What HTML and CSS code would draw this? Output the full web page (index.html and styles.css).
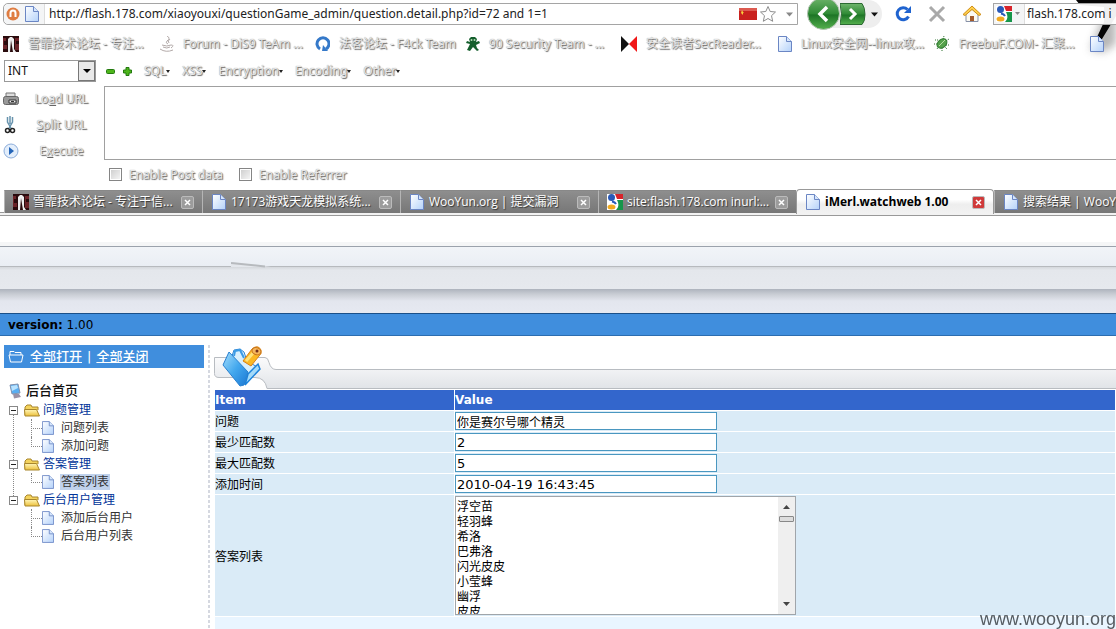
FILE: index.html
```html
<!DOCTYPE html>
<html lang="zh-CN">
<head>
<meta charset="utf-8">
<title>iMerl.watchweb 1.00</title>
<link rel="stylesheet" href="styles.css">
</head>
<body>
<svg class="defs" aria-hidden="true">
  <defs>
    <linearGradient id="paper" x1="0" y1="0" x2="1" y2="1"><stop offset="0" stop-color="#fff"/><stop offset="1" stop-color="#b4d2fa"/></linearGradient>
    <linearGradient id="green" x1="0" y1="0" x2="0" y2="1"><stop offset="0" stop-color="#6fb56c"/><stop offset=".5" stop-color="#2f8a35"/><stop offset=".55" stop-color="#1d7526"/><stop offset="1" stop-color="#55b04e"/></linearGradient>
    <linearGradient id="gold" x1="0" y1="0" x2="0" y2="1"><stop offset="0" stop-color="#fff6b8"/><stop offset="1" stop-color="#ecc03c"/></linearGradient>
    <linearGradient id="blue" x1="0" y1="0" x2="1" y2="1"><stop offset="0" stop-color="#a5ddfb"/><stop offset=".5" stop-color="#43a8ee"/><stop offset="1" stop-color="#1b78d4"/></linearGradient>
    <linearGradient id="silver" x1="0" y1="0" x2="0" y2="1"><stop offset="0" stop-color="#fbfbfc"/><stop offset="1" stop-color="#e1e4e8"/></linearGradient>
    <filter id="soft" x="-50%" y="-50%" width="200%" height="200%"><feGaussianBlur stdDeviation="4"/></filter>
  </defs>
  <symbol id="doc" viewBox="0 0 14 16"><path d="M.5.5h8l5 5v10H.5z" fill="url(#paper)" stroke="#6b86c4"/><path d="M8.500.5v5h5" fill="#d5e5fb" stroke="#6b86c4"/></symbol>
  <symbol id="google" viewBox="0 0 16 16"><rect width="16" height="16" fill="#fff"/><path d="M8 0h8v5h-6z" fill="#d8232a"/><path d="M10 6h6v10H9c3-3 3-6 1-10z" fill="#16964a"/><circle cx="4.500" cy="3.500" r="3.500" fill="#2859b8"/><ellipse cx="4.500" cy="13" rx="4" ry="2.500" fill="#f1a91f"/><path d="M5 7.500q3 .5 4 2.500" fill="none" stroke="#2859b8" stroke-width="2"/></symbol>
  <symbol id="forum" viewBox="0 0 16 16"><rect width="16" height="16" fill="#2a0b0d"/><path d="M0 2h3v3H1v4h3v4H0M12 2h4v3h-3v3h3v6h-4" fill="#6b2328"/><path d="M5 16V3l2-2h2l2 2v10l2 3h-3L8 4 7 16z" fill="#eee"/></symbol>
  <symbol id="folder" viewBox="0 0 16 13"><path d="M1 11V3l2-2h4l1 2h6v3" fill="#f4d35d" stroke="#a8862d"/><path d="M1 12 .5 5.500h12L15.500 12z" fill="url(#gold)" stroke="#a8862d"/></symbol>
  <symbol id="close" viewBox="0 0 13 13"><rect x=".5" y=".5" width="12" height="12" rx="1.500" fill="currentColor" stroke="#bbb"/><path d="m4 4 5 5M9 4 4 9" stroke="#fff" stroke-width="1.500"/></symbol>
</svg>

<header class="chrome">
  <svg class="stroke" viewBox="0 0 56 62" aria-hidden="true"><path d="M30 50 42 20 56 0v44l-12 8z" fill="#999" opacity=".7" filter="url(#soft)"/><path d="M16 0h40v16L42 39l-6 8-4 1 12-26V7L20 5z" fill="#050505"/></svg>
  <div class="nav">
    <div class="address">
      <span class="identity">
        <svg width="14" height="14" viewBox="0 0 14 14"><circle cx="7" cy="7" r="6.500" fill="#df7d42"/><path d="M4.500 10V6a2.500 2.500 0 0 1 5 0v4" fill="none" stroke="#fff" stroke-width="2"/></svg>
        <svg width="14" height="16"><use href="#doc"/></svg>
      </span>
      <input class="url" type="text" aria-label="地址" value="http://flash.178.com/xiaoyouxi/questionGame_admin/question.detail.php?id=72 and 1=1">
      <svg width="18" height="12"><rect width="18" height="12" fill="#c9211e"/><path d="M0 0h18v3H0z" fill="#dc5a50"/><path d="m3 2 1 2h1L4 5v2L2 5z" fill="#f7d23c"/></svg>
      <svg width="18" height="18" viewBox="0 0 18 18"><path d="m9 1.500 2.200 5 5.300.5-4 3.700 1.200 5.600L9 13.500l-4.700 2.800 1.200-5.600-4-3.700 5.300-.5z" fill="#fff" stroke="#8e8e8e"/></svg>
      <svg class="drop" width="7" height="5"><path d="M0 .5h7L3.500 4.500z" fill="#888"/></svg>
    </div>
    <div class="travel">
      <button type="button" aria-label="后退"><svg width="33" height="32" viewBox="0 0 33 32"><circle cx="16.500" cy="13.500" r="16" fill="url(#green)" stroke="#b4c4b3"/><path d="m20 7-7 7 7 7" fill="none" stroke="#fff" stroke-width="3.500"/></svg></button>
      <button type="button" aria-label="前进"><svg width="26" height="32" viewBox="0 0 26 32"><path d="M0 3.500h22q3 4 3 11t-3 10H0q3-11 0-21z" fill="url(#green)" stroke="#2c6a32"/><path d="m10 9 5 5-5 5" fill="none" stroke="#fff" stroke-width="3"/></svg></button>
      <button class="history" type="button" aria-label="历史"><svg width="7" height="5"><path d="M0 .5h7L3.500 4.500z" fill="#111"/></svg></button>
    </div>
    <button type="button" aria-label="刷新"><svg width="18" height="18" viewBox="0 0 18 18"><path d="M14.500 11.500a6 6 0 1 1-1-7" fill="none" stroke="#1f63cf" stroke-width="3"/><path d="M17 1v7h-7z" fill="#1f63cf"/></svg></button>
    <button type="button" aria-label="停止"><svg width="18" height="18" viewBox="0 0 18 18"><path d="m2 2 14 14M16 2 2 16" stroke="#a9a9a9" stroke-width="3"/></svg></button>
    <button type="button" aria-label="主页"><svg width="20" height="18" viewBox="0 0 20 18"><path d="M4 9v7.500h12V9l-6-5z" fill="#fbf9f2" stroke="#8791a8"/><path d="M8 11h4v5H8z" fill="#a35b2d"/><path d="M1 9.500 10 1l9 8.500-2 1-7-6-7 6z" fill="#ffd04d" stroke="#cf8d16"/></svg></button>
    <div class="search">
      <span class="engine"><svg width="16" height="16"><use href="#google"/></svg><svg width="5" height="4"><path d="M0 0h5L2.500 3z" fill="#888"/></svg></span>
      <input class="url" type="text" aria-label="搜索" value="flash.178.com i">
    </div>
  </div>

  <nav class="bookmarks">
    <a href="#"><svg width="16" height="16"><use href="#forum"/></svg><span>雪霏技术论坛 - 专注...</span></a>
    <a href="#"><svg width="14" height="16" viewBox="0 0 14 16"><path d="M7 0q4 2 0 5-2 2 1 3M10 3q-3 2-1 4M2 9q5 2 9 0 4 0 0 3M3 11q4 2 7 0M0 13q6 4 13 1" fill="none" stroke="#b3aaa9"/></svg><span>Forum - DiS9 TeAm ...</span></a>
    <a href="#"><svg width="15" height="16" viewBox="0 0 15 16"><path d="M5 13A6 6 0 1 1 11 13" fill="none" stroke="#3579c9" stroke-width="3"/><path d="m8 9 5 6H7z" fill="#3579c9"/></svg><span>法客论坛 - F4ck Team</span></a>
    <a href="#"><svg width="14" height="16" viewBox="0 0 14 16"><path d="M5 1h4l2 2-1 3 3-1 1 2-4 2 1 3 2 2-2 1-4-4-3 4-3-1 3-6-4-1 1-2 3 1-1-3z" fill="#145f2c"/><circle cx="5.500" cy="4" r="1" fill="#b6ddb8"/><circle cx="8.500" cy="4" r="1" fill="#b6ddb8"/></svg><span>90 Security Team - ...</span></a>
    <a href="#"><svg width="16" height="16"><path d="M0 0 8 8 0 16z" fill="#111"/><path d="M16 0 8 8l8 8z" fill="#f01818"/></svg><span>安全读者SecReader...</span></a>
    <a href="#"><svg width="14" height="16"><use href="#doc"/></svg><span>Linux安全网--linux攻...</span></a>
    <a href="#"><svg width="16" height="16" viewBox="0 0 16 16"><path d="M1 4h3M0 8h4M3 13l2-3M8 15v-3M13 13l-2-2M15 9h-3M15 3l-3 2M10 0 9 3" stroke="#317231" stroke-dasharray="1 1"/><ellipse cx="8" cy="7.500" rx="5.500" ry="4" fill="#55a24c" stroke="#2f7a2f" transform="rotate(-40 8 7.500)"/><path d="m5 10 6-6" stroke="#b9e0a5"/></svg><span>FreebuF.COM- 汇聚...</span></a>
    <a href="#" aria-label="书签"><svg width="14" height="16"><use href="#doc"/></svg></a>
  </nav>

  <div class="hackbar">
    <div class="tools">
      <span class="combo"><select aria-label="类型"><option>INT</option></select><span class="arrow"></span></span>
      <button type="button" aria-label="减"><svg width="9" height="9"><rect x=".5" y="2.500" width="8" height="4" rx="1" fill="#4db51b" stroke="#23790f"/></svg></button>
      <button class="plus" type="button" aria-label="加"><svg width="9" height="9"><path d="M3 .5h3V3h2.500v3H6v2.500H3V6H.5V3H3z" fill="#4db51b" stroke="#23790f"/></svg></button>
      <button class="menu" type="button">SQL</button>
      <button class="menu" type="button">XSS</button>
      <button class="menu" type="button">Encryption</button>
      <button class="menu" type="button">Encoding</button>
      <button class="menu" type="button">Other</button>
    </div>
    <div class="loader">
      <div class="actions">
        <button type="button"><svg width="16" height="16" viewBox="0 0 16 16"><path d="M3 6V2h9v4" fill="#ddd" stroke="#777"/><rect x=".5" y="5.500" width="15" height="8" rx="2" fill="#999" stroke="#666"/><path d="M6 9h7v3H6z" fill="#eee" stroke="#333"/><path d="M8 10.500h3" stroke="#333"/></svg><span>Lo<u>a</u>d URL</span></button>
        <button type="button"><svg width="16" height="18" viewBox="0 0 16 18"><path d="M4.500 1v5l4 7M9.500 1v5l-4 7M7 0v8" fill="none" stroke="#6793ad" stroke-width="1.500"/><circle cx="4.500" cy="14.500" r="2" fill="none" stroke="#222" stroke-width="1.500"/><circle cx="9.500" cy="14.500" r="2" fill="none" stroke="#222" stroke-width="1.500"/></svg><span><u>S</u>plit URL</span></button>
        <button type="button"><svg width="16" height="16" viewBox="0 0 16 16"><circle cx="8" cy="8" r="7" fill="#e3eefb" stroke="#8daedb"/><path d="m6 4 5 4-5 4z" fill="#2465b8"/></svg><span>E<u>x</u>ecute</span></button>
      </div>
      <textarea aria-label="URL"></textarea>
    </div>
    <div class="checks">
      <label><input type="checkbox"><span>Enable Post data</span></label>
      <label><input type="checkbox"><span>Enable Referrer</span></label>
    </div>
  </div>

  <div class="tabs">
    <div class="tab"><svg width="16" height="16"><use href="#forum"/></svg><span>雪霏技术论坛 - 专注于信...</span><button type="button" aria-label="关闭"><svg width="13" height="13"><use href="#close"/></svg></button></div>
    <div class="tab"><svg width="16" height="16"><use href="#doc"/></svg><span>17173游戏天龙模拟系统...</span><button type="button" aria-label="关闭"><svg width="13" height="13"><use href="#close"/></svg></button></div>
    <div class="tab"><svg width="16" height="16"><use href="#doc"/></svg><span>WooYun.org | 提交漏洞</span><button type="button" aria-label="关闭"><svg width="13" height="13"><use href="#close"/></svg></button></div>
    <div class="tab"><svg width="16" height="16"><use href="#google"/></svg><span>site:flash.178.com inurl:...</span><button type="button" aria-label="关闭"><svg width="13" height="13"><use href="#close"/></svg></button></div>
    <div class="tab active"><svg width="16" height="16"><use href="#doc"/></svg><span>iMerl.watchweb 1.00</span><button type="button" aria-label="关闭"><svg width="13" height="13"><use href="#close"/></svg></button></div>
    <div class="tab last"><svg width="16" height="16"><use href="#doc"/></svg><span>搜索结果 | WooY</span></div>
  </div>
</header>

<div class="banner">
  <div class="band-top"><svg class="notch" width="40" height="6" viewBox="0 0 40 6"><path d="M0 0v5h40z" fill="#e4e7ec"/><path d="M0 1 34 4.500" stroke="#b7babe" stroke-width="2"/></svg></div>
  <div class="band-mid"></div>
  <div class="band-low"></div>
</div>
<div class="version"><b>version:</b> 1.00</div>

<div class="layout">
  <aside class="side">
    <div class="side-head">
      <svg width="16" height="13" viewBox="0 0 16 13"><path d="M2 5V1.500h4l1 1h6V5M1 5h14l-1.500 7h-11z" fill="none" stroke="#fff"/></svg>
      <a href="#">全部打开</a><span>|</span><a href="#">全部关闭</a>
    </div>
    <div class="tree">
      <div class="root"><svg width="13" height="16" viewBox="0 0 13 16"><path d="m1 2 8-1 2 9-8 1z" fill="#59aef2" stroke="#8291ad"/><path d="m2 3 6-1 1 3-6 3z" fill="#b9e3ff"/><path d="M4 11h6l2 3-7 1.500z" fill="#9a91a5"/></svg>后台首页</div>
      <ul>
        <li><div class="node"><i class="toggle"></i><svg width="16" height="13"><use href="#folder"/></svg><a href="#">问题管理</a></div>
          <ul><li><svg width="12" height="14"><use href="#doc"/></svg><a href="#">问题列表</a></li><li><svg width="12" height="14"><use href="#doc"/></svg><a href="#">添加问题</a></li></ul></li>
        <li><div class="node"><i class="toggle"></i><svg width="16" height="13"><use href="#folder"/></svg><a href="#">答案管理</a></div>
          <ul><li><svg width="12" height="14"><use href="#doc"/></svg><a class="current" href="#">答案列表</a></li></ul></li>
        <li><div class="node"><i class="toggle"></i><svg width="16" height="13"><use href="#folder"/></svg><a href="#">后台用户管理</a></div>
          <ul><li><svg width="12" height="14"><use href="#doc"/></svg><a href="#">添加后台用户</a></li><li><svg width="12" height="14"><use href="#doc"/></svg><a href="#">后台用户列表</a></li></ul></li>
      </ul>
    </div>
  </aside>
  <div class="divider"></div>
  <main class="main">
    <div class="ribbon">
      <svg width="62" height="44" viewBox="0 0 62 44">
        <path d="M.5 12.500H51q3 0 4 5 2 7 7 7v19H53q-2-11-12-11H5q-4.500 0-4.500-4z" fill="url(#silver)"/>
        <path d="M62 24.500q-5 0-7-7-1-5-4-5H.5v16q0 4 4.500 4h36q10 0 12 11h9" fill="none" stroke="#b8bcc1"/>
        <path d="m18 11 2-6 6-1 4 3 3 9 12 7-16 16z" fill="#d7effd" stroke="#2c85d4"/>
        <path d="m20 11 1-5 5-1 4 8" fill="none" stroke="#3a9be6" stroke-width="2"/>
        <path d="m34 29 10-10 2 5-15 16z" fill="#a4daf9" stroke="#1c83dc" stroke-width="1.500"/>
        <path d="m15 7 19 20-4 13-4 1L9 20z" fill="url(#blue)" stroke="#2880d0"/>
        <path d="m29 16 9-12q6-5 9 1 1 4-2 6l-8 10z" fill="#fbb823" stroke="#d98116"/>
        <path d="M32 16 40 7" stroke="#ffe27a" stroke-width="3"/>
        <ellipse cx="42.500" cy="6" rx="4.500" ry="3.500" fill="#f6b65c" stroke="#c6741d" transform="rotate(20 42 6)"/><circle cx="43" cy="6" r="1.500" fill="#742f1b"/>
      </svg>
      <div class="ribbon-rest"></div>
    </div>
    <table>
      <colgroup><col class="col-item"><col></colgroup>
      <thead><tr><th>Item</th><th>Value</th></tr></thead>
      <tbody>
        <tr><td><label for="q">问题</label></td><td><input id="q" type="text" value="你是赛尔号哪个精灵"></td></tr>
        <tr><td><label for="min">最少匹配数</label></td><td><input id="min" type="text" value="2"></td></tr>
        <tr><td><label for="max">最大匹配数</label></td><td><input id="max" type="text" value="5"></td></tr>
        <tr><td><label for="time">添加时间</label></td><td><input id="time" type="text" value="2010-04-19 16:43:45"></td></tr>
        <tr><td><label for="answers">答案列表</label></td><td>
          <div class="listbox">
            <select id="answers" multiple size="8"><option>浮空苗</option><option>轻羽蜂</option><option>希洛</option><option>巴弗洛</option><option>闪光皮皮</option><option>小莹蜂</option><option>幽浮</option><option>皮皮</option></select>
            <div class="scroll"><svg width="7" height="4"><path d="M3.500 0 7 4H0z" fill="#444"/></svg><i></i><svg width="7" height="4"><path d="M0 0h7L3.500 4z" fill="#444"/></svg></div>
          </div></td></tr>
      </tbody>
    </table>
    <div class="foot"></div>
  </main>
</div>
<div class="watermark">www.wooyun.org</div>
</body>
</html>
```
FILE: styles.css
```css
* { box-sizing: border-box; }
body {
  display: flex;
  flex-direction: column;
  margin: 0;
  height: 100vh;
  overflow: hidden;
  background: #fff;
  color: #000;
  font: 12px/18px "DejaVu Sans", "Noto Sans CJK SC", sans-serif;
}
button { border: 0; padding: 0; background: none; font: inherit; color: inherit; }
svg { display: block; flex: none; }
a { color: inherit; text-decoration: none; }
ul { margin: 0; padding: 0; list-style: none; }
.defs { position: absolute; width: 0; height: 0; }

/* Browser toolbars */
.chrome {
  position: relative;
  flex: none;
  font: 12px/18px "Noto Sans", "Noto Sans CJK SC", sans-serif;
  border-bottom: 1px solid #999;
}
.stroke { position: absolute; top: 0; right: 0; width: 56px; height: 62px; }
.nav { position: relative; display: flex; align-items: center; height: 28px; padding-left: 3px; }
.address, .search {
  display: flex;
  align-items: center;
  height: 22px;
  background: #fff;
  border: 1px solid #a5a5a5;
}
.address { flex: 1; gap: 2px; border-radius: 5px 0 0 5px; padding-right: 4px; }
.identity, .engine {
  display: flex;
  align-items: center;
  gap: 5px;
  height: 100%;
  padding: 0 4px 0 2px;
  border-right: 1px solid #ddd;
  background: #f4f5f6;
  border-radius: 5px 0 0 5px;
}
.identity { width: 41px; }
.engine { gap: 3px; border-radius: 0; }
.url {
  flex: 1;
  min-width: 0;
  border: 0;
  padding: 0 0 0 2px;
  background: none;
  font: 12px/18px "Noto Sans", "Noto Sans CJK SC", sans-serif;
  color: #222;
}
.drop { margin-left: 7px; }
.travel {
  display: flex;
  margin: 0 12px 0 9px;
  height: 28px;
  background: #eee;
  border-radius: 14px;
}
.travel button { height: 28px; }
.history { width: 16px; padding-left: 5px; }
.nav > button { margin-right: 16px; }
.nav > button:last-of-type { margin-right: 11px; }
.search { flex: 0 0 123px; min-width: 0; border-right: 0; background: #fffffff0; }
.bookmarks {
  position: relative;
  display: grid;
  grid-template-columns: 157px 155px 151px 155px 157px 156px 156px 26px;
  height: 32px;
  padding-left: 3px;
  align-items: center;
}
.bookmarks a { display: flex; align-items: center; gap: 9px; white-space: nowrap; }
.bookmarks a span, .menu, .actions span, .checks span {
  color: #e8e8e8;
  text-shadow: 1px 1px 1px #666, 0 0 1px #888;
}
.tools { display: flex; align-items: center; padding-left: 4px; height: 22px; }
.combo { position: relative; width: 92px; height: 22px; margin-right: 10px; }
.combo select {
  appearance: none;
  width: 100%;
  height: 100%;
  border: 1px solid #999;
  border-radius: 0;
  background: #fff;
  padding: 0 3px;
  font: 12px/18px "Noto Sans", sans-serif;
  color: #111;
}
.arrow {
  position: absolute;
  top: 1px;
  right: 1px;
  width: 17px;
  height: 20px;
  border: 1px solid #777;
  background: #e8e8e8;
  pointer-events: none;
}
.arrow::after { content: ""; position: absolute; left: 4px; top: 7px; border: 4px solid transparent; border-top-color: #000; border-bottom: 0; }
.plus { margin: 0 12px 0 8px; }
.menu { display: flex; align-items: center; margin-right: 12px; }
.menu::after { content: ""; border: 2px solid transparent; border-top: 3px solid #222; border-bottom: 0; }
.loader { display: flex; padding-top: 4px; }
.actions { width: 104px; flex: none; padding-left: 3px; }
.actions button { display: grid; grid-template-columns: 16px 1fr; align-items: center; width: 100%; height: 26px; }
.loader textarea { flex: 1; height: 74px; margin: 0; resize: none; border: 1px solid #a0a0a0; border-right: 0; border-radius: 0; background: #fff; }
.checks { display: flex; gap: 16px; height: 25px; padding: 0 0 4px 109px; align-items: center; }
.checks label { display: flex; align-items: center; gap: 7px; }
.checks input { appearance: none; width: 13px; height: 13px; margin: 0; border: 1px solid #858585; background: linear-gradient(135deg, #ccc, #f8f8f8); box-shadow: inset 0 0 0 1px #fff; }
.tabs {
  display: flex;
  height: 26px;
  padding-left: 4px;
  overflow: hidden;
  font-family: "Open Sans", "Noto Sans CJK SC", sans-serif;
  background: linear-gradient(#fff 23px, #999 23px, #999 24px, #f2f2f2 24px);
}
.tab {
  display: flex;
  flex: 0 0 198px;
  align-items: center;
  gap: 4px;
  height: 23px;
  padding: 0 8px;
  margin-top: 1px;
  border-left: 1px solid #b5b5b5;
  border-top: 1px solid #888;
  background: linear-gradient(#8e8e8e, #777);
  color: #fff;
  text-shadow: 1px 1px 1px #333;
  white-space: nowrap;
}
.tab.last { flex: 1 0 123px; padding-right: 0; }
.tab span { flex: 1; min-width: 0; }
.tab button { color: #9c9c9c; }
.tab.active {
  height: 25px;
  margin-top: 0;
  border: 1px solid #999;
  border-bottom: 0;
  border-radius: 4px 4px 0 0;
  background: linear-gradient(#fff 40%, #eee 60%, #f2f2f2);
  color: #000;
  font-weight: 700;
  text-shadow: none;
}
.tab.active button { color: #d03a3a; }

/* Page banner */
.banner { flex: none; padding-top: 26px; }
.band-top {
  position: relative;
  height: 25px;
  border-top: 4px solid #f5f6f7;
  border-bottom: 1px solid #b7babe;
  background: linear-gradient(#9ba2ac 1px, #f1f4f8 1px, #eaeef4);
}
.notch { position: absolute; left: 231px; bottom: -2px; }
.band-mid { height: 22px; background: linear-gradient(#d5d8dc, #e4e7ec 3px, #e6e9ee); }
.band-low { height: 24px; background: linear-gradient(#adb3bd, #c8ccd3 5px, #e3e6ee 12px, #e6e9f1); }
.version {
  flex: none;
  height: 23px;
  padding: 0 8px;
  border-top: 1px solid #1a5089;
  border-bottom: 1px solid #2c6db0;
  background: #408edd;
  line-height: 22px;
}

.layout { display: flex; flex: 1; min-height: 0; padding-top: 9px; overflow: hidden; }
.side { flex: 0 0 208px; padding-left: 4px; }
.side-head { display: flex; align-items: center; gap: 5px; width: 200px; height: 23px; padding-left: 4px; background: #408edd; color: #fff; font-size: 13px; font-weight: 500; }
.side-head a { text-decoration: underline; }
.side-head svg { margin-right: 1px; }
.tree { padding: 14px 0 0 5px; color: #333; }
.tree > ul { padding-top: 1px; }
.root { display: flex; align-items: center; gap: 4px; font-size: 13px; font-weight: 500; color: #111; }
.tree > ul > li { position: relative; }
.tree > ul > li:not(:last-child)::before { content: ""; position: absolute; left: 4px; top: 9px; bottom: -9px; border-left: 1px dotted #888; }
.node { position: relative; display: flex; align-items: center; gap: 3px; color: #039; height: 18px; }
.node svg { margin-left: 3px; }
.node a { padding-left: 0; }
.toggle { position: relative; width: 9px; height: 9px; border: 1px solid #888; background: linear-gradient(#222, #222) center / 5px 1px no-repeat #fff; }
.tree li li { position: relative; display: flex; align-items: center; gap: 6px; height: 18px; padding-left: 33px; }
.tree li li::before { content: ""; position: absolute; left: 22px; top: 0; width: 10px; height: 9px; border-left: 1px dotted #888; border-bottom: 1px dotted #888; }
.tree li li:not(:last-child)::after { content: ""; position: absolute; left: 22px; top: 9px; height: 9px; border-left: 1px dotted #888; }
.tree li li a { line-height: 16px; padding: 0 1px; }
.current { background: #c0d2ec; }
.divider { flex: 0 0 2px; background: repeating-linear-gradient(#d5d8e0 0 3px, #fff 3px 5px); }
.main { display: flex; flex-direction: column; flex: 1; min-width: 0; padding-left: 4px; }
.ribbon { display: flex; flex: none; height: 44px; }
.ribbon-rest { flex: 1; margin-top: 24px; border: solid #b8bcc1; border-width: 1px 0; background: linear-gradient(#f1f2f4, #e1e4e8); }
table { flex: none; width: 100%; table-layout: fixed; border-spacing: 1px; }
.col-item { width: 239px; }
th { height: 20px; padding: 0; background: #36c; color: #fff; line-height: 20px; text-align: left; }
td { height: 20px; padding: 0; background: #daebf7; vertical-align: middle; }
td label { display: block; padding-top: 2px; }
td input {
  display: block;
  width: 262px;
  height: 18px;
  border: 1px solid #4a97c0;
  padding: 0 1px;
  background: #fff;
  font: 13px/16px "DejaVu Sans", "Noto Sans CJK SC", sans-serif;
}
#q { font-size: 12px; }
.listbox { display: flex; width: 341px; height: 119px; margin: 1px 0; border: 1px solid #a0a5aa; background: #fff; }
.listbox select { flex: 1; min-width: 0; height: 117px; overflow: hidden; border: 0; border-radius: 0; padding: 0; background: #fff; outline: 0; font: 12px/15px "DejaVu Sans", "Noto Sans CJK SC", sans-serif; }
.listbox option { height: 15px; min-height: 15px; padding: 0 1px; line-height: 15px; }
.scroll { display: flex; flex-direction: column; align-items: center; width: 17px; padding: 8px 0; background: #efefef; }
.scroll i { width: 15px; height: 6px; margin: 7px 0 auto; border: 1px solid #888; border-radius: 1px; background: #ddd; }
.foot { flex: 1; margin-left: 1px; background: #e9f5ff; }
.watermark { position: fixed; right: 0; bottom: 0; font: 18px/20px "Liberation Sans", sans-serif; color: #555c62; }
```
